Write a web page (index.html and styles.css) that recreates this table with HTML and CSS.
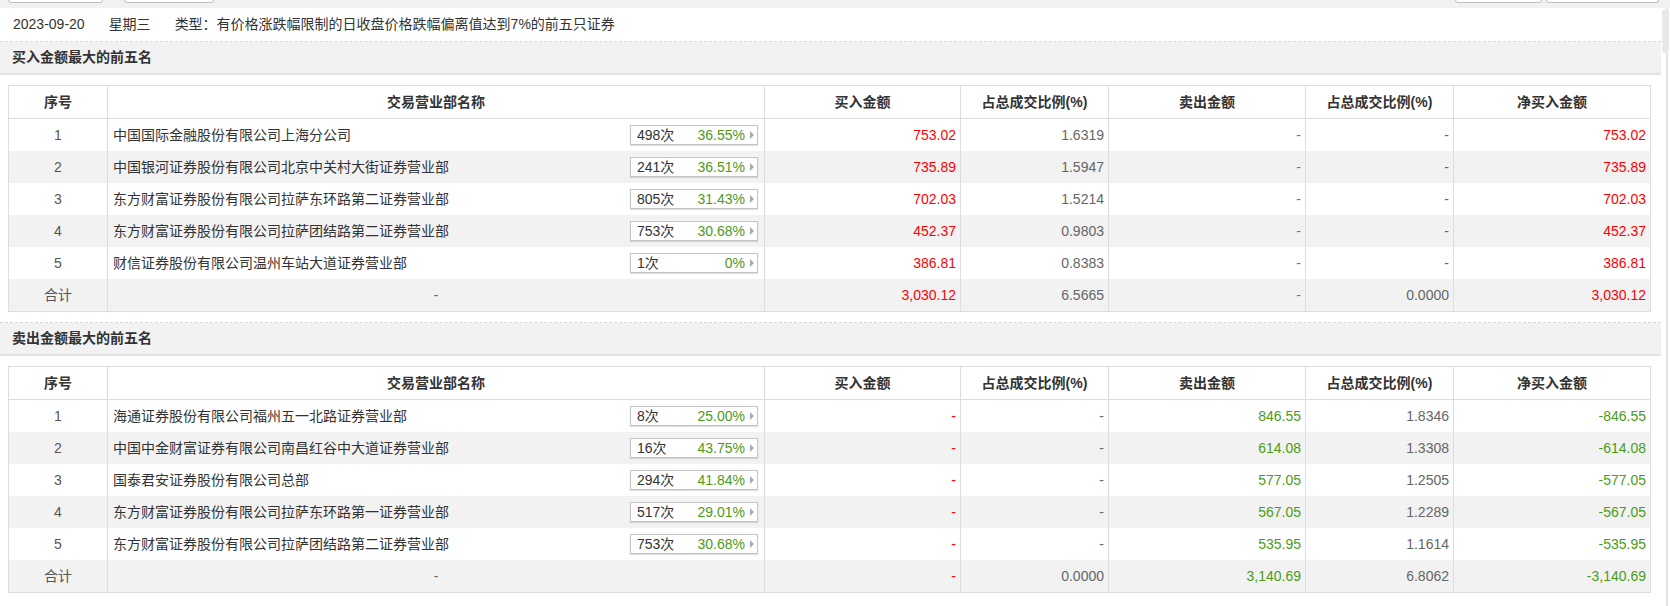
FILE: index.html
```html
<!DOCTYPE html>
<html lang="zh-CN">
<head>
<meta charset="utf-8">
<title>龙虎榜单</title>
<link rel="stylesheet" href="styles.css">
</head>
<body>
<div class="topbar">
  <div class="btns left"><span class="tbtn b1"></span><span class="tbtn b2"></span></div>
  <div class="btns right"><span class="tbtn b3"></span><span class="tbtn b4"></span></div>
</div>
<div class="viewport">
  <div class="main">
    <div class="dateline"><span>2023-09-20</span><span>星期三</span><span>类型：有价格涨跌幅限制的日收盘价格跌幅偏离值达到7%的前五只证券</span></div>

    <section class="block">
      <h3 class="block-title">买入金额最大的前五名</h3>
      <div class="block-body">
        <table class="lhb">
          <thead>
            <tr><th class="c1">序号</th><th class="c2">交易营业部名称</th><th class="c3">买入金额</th><th class="c4">占总成交比例(%)</th><th class="c5">卖出金额</th><th class="c6">占总成交比例(%)</th><th class="c7">净买入金额</th></tr>
          </thead>
          <tbody>
            <tr><td class="idx">1</td><td class="name"><div class="namecell"><span>中国国际金融股份有限公司上海分公司</span><span class="badge"><span class="cnt">498次</span><span class="pct">36.55%</span><i class="arr"></i></span></div></td><td class="red">753.02</td><td class="gray">1.6319</td><td class="green">-</td><td class="gray">-</td><td class="red">753.02</td></tr>
            <tr><td class="idx">2</td><td class="name"><div class="namecell"><span>中国银河证券股份有限公司北京中关村大街证券营业部</span><span class="badge"><span class="cnt">241次</span><span class="pct">36.51%</span><i class="arr"></i></span></div></td><td class="red">735.89</td><td class="gray">1.5947</td><td class="green">-</td><td class="gray">-</td><td class="red">735.89</td></tr>
            <tr><td class="idx">3</td><td class="name"><div class="namecell"><span>东方财富证券股份有限公司拉萨东环路第二证券营业部</span><span class="badge"><span class="cnt">805次</span><span class="pct">31.43%</span><i class="arr"></i></span></div></td><td class="red">702.03</td><td class="gray">1.5214</td><td class="green">-</td><td class="gray">-</td><td class="red">702.03</td></tr>
            <tr><td class="idx">4</td><td class="name"><div class="namecell"><span>东方财富证券股份有限公司拉萨团结路第二证券营业部</span><span class="badge"><span class="cnt">753次</span><span class="pct">30.68%</span><i class="arr"></i></span></div></td><td class="red">452.37</td><td class="gray">0.9803</td><td class="green">-</td><td class="gray">-</td><td class="red">452.37</td></tr>
            <tr><td class="idx">5</td><td class="name"><div class="namecell"><span>财信证券股份有限公司温州车站大道证券营业部</span><span class="badge"><span class="cnt">1次</span><span class="pct">0%</span><i class="arr"></i></span></div></td><td class="red">386.81</td><td class="gray">0.8383</td><td class="green">-</td><td class="gray">-</td><td class="red">386.81</td></tr>
            <tr><td class="idx">合计</td><td class="mid gray">-</td><td class="red">3,030.12</td><td class="gray">6.5665</td><td class="green">-</td><td class="gray">0.0000</td><td class="red">3,030.12</td></tr>
          </tbody>
        </table>
      </div>
    </section>

    <section class="block">
      <h3 class="block-title">卖出金额最大的前五名</h3>
      <div class="block-body">
        <table class="lhb">
          <thead>
            <tr><th class="c1">序号</th><th class="c2">交易营业部名称</th><th class="c3">买入金额</th><th class="c4">占总成交比例(%)</th><th class="c5">卖出金额</th><th class="c6">占总成交比例(%)</th><th class="c7">净买入金额</th></tr>
          </thead>
          <tbody>
            <tr><td class="idx">1</td><td class="name"><div class="namecell"><span>海通证券股份有限公司福州五一北路证券营业部</span><span class="badge"><span class="cnt">8次</span><span class="pct">25.00%</span><i class="arr"></i></span></div></td><td class="red">-</td><td class="gray">-</td><td class="green">846.55</td><td class="gray">1.8346</td><td class="green">-846.55</td></tr>
            <tr><td class="idx">2</td><td class="name"><div class="namecell"><span>中国中金财富证券有限公司南昌红谷中大道证券营业部</span><span class="badge"><span class="cnt">16次</span><span class="pct">43.75%</span><i class="arr"></i></span></div></td><td class="red">-</td><td class="gray">-</td><td class="green">614.08</td><td class="gray">1.3308</td><td class="green">-614.08</td></tr>
            <tr><td class="idx">3</td><td class="name"><div class="namecell"><span>国泰君安证券股份有限公司总部</span><span class="badge"><span class="cnt">294次</span><span class="pct">41.84%</span><i class="arr"></i></span></div></td><td class="red">-</td><td class="gray">-</td><td class="green">577.05</td><td class="gray">1.2505</td><td class="green">-577.05</td></tr>
            <tr><td class="idx">4</td><td class="name"><div class="namecell"><span>东方财富证券股份有限公司拉萨东环路第一证券营业部</span><span class="badge"><span class="cnt">517次</span><span class="pct">29.01%</span><i class="arr"></i></span></div></td><td class="red">-</td><td class="gray">-</td><td class="green">567.05</td><td class="gray">1.2289</td><td class="green">-567.05</td></tr>
            <tr><td class="idx">5</td><td class="name"><div class="namecell"><span>东方财富证券股份有限公司拉萨团结路第二证券营业部</span><span class="badge"><span class="cnt">753次</span><span class="pct">30.68%</span><i class="arr"></i></span></div></td><td class="red">-</td><td class="gray">-</td><td class="green">535.95</td><td class="gray">1.1614</td><td class="green">-535.95</td></tr>
            <tr><td class="idx">合计</td><td class="mid gray">-</td><td class="red">-</td><td class="gray">0.0000</td><td class="green">3,140.69</td><td class="gray">6.8062</td><td class="green">-3,140.69</td></tr>
          </tbody>
        </table>
      </div>
    </section>
  </div>
  <div class="scrollbar"><div class="thumb"></div></div>
</div>
</body>
</html>
```

FILE: styles.css
```css
* { box-sizing: border-box; }

html, body {
  margin: 0;
  padding: 0;
  background: #fff;
}

body {
  width: 1670px;
  height: 606px;
  overflow: hidden;
  font-family: "Liberation Sans", Arial, "Noto Sans CJK SC", sans-serif;
  font-size: 14px;
  color: #333;
}

/* top toolbar (scrolled mostly out of view) */
.topbar {
  height: 8px;
  background: #f1f1f1;
  display: flex;
  justify-content: space-between;
  align-items: flex-end;
  padding: 0 11px 0 8px;
  overflow: hidden;
}

.btns {
  display: flex;
  align-items: flex-end;
}

.btns.left { gap: 21px; }
.btns.right { gap: 4px; }

.tbtn {
  display: block;
  height: 22px;
  margin-bottom: 5px;
  background: #fff;
  border: 1px solid #bdbdbd;
  border-radius: 0 0 3px 3px;
}

.b1 { width: 95px; }
.b2 { width: 90px; }
.b3 { width: 87px; }
.b4 { width: 113px; }

.viewport {
  display: flex;
  height: 598px;
}

.main {
  flex: 0 0 1661px;
}

.scrollbar {
  flex: 1;
  padding: 1px 1px 0 1px;
  background: linear-gradient(to right, #fff 5px, #e4e4e4 5px, #e4e4e4 7px, #fff 7px);
}

.thumb {
  height: 44px;
  background: #e8e8e8;
  border-radius: 4px;
}

/* date line */
.dateline {
  height: 33px;
  line-height: 32px;
  padding-left: 13px;
  white-space: nowrap;
}

.dateline span {
  margin-right: 24px;
}

/* blocks */
.block {
  border-top: 1px dashed #d6d6d6;
}

.block-title {
  margin: 0;
  height: 33px;
  line-height: 31px;
  background: #f2f2f2;
  border-bottom: 2px solid #e3e3e3;
  font-size: 14px;
  font-weight: bold;
  padding-left: 12px;
  color: #333;
}

.block-body {
  padding: 10px 10px 10px 8px;
}

/* table */
.lhb {
  width: 100%;
  table-layout: fixed;
  border-collapse: separate;
  border-spacing: 0;
  border: 1px solid #ddd;
}

.lhb th {
  height: 33px;
  padding: 0;
  border-bottom: 1px solid #ddd;
  font-weight: bold;
  text-align: center;
  color: #333;
  line-height: 16px;
}

.lhb td {
  height: 32px;
  padding: 0 4px;
  text-align: right;
  line-height: 16px;
  white-space: nowrap;
}

.lhb th + th,
.lhb td + td {
  border-left: 1px solid #ddd;
}

.lhb tbody tr:nth-child(even) td {
  background: #f2f2f2;
}

.c1 { width: 98px; }
.c2 { width: 657px; }
.c3 { width: 196px; }
.c4 { width: 148px; }
.c5 { width: 197px; }
.c6 { width: 148px; }

.lhb td.idx {
  text-align: center;
  color: #555;
}

.lhb td.mid {
  text-align: center;
}

.lhb td.name {
  text-align: left;
  padding: 0 6px 0 5px;
  color: #333;
}

.namecell {
  display: flex;
  justify-content: space-between;
  align-items: center;
}

.badge {
  display: flex;
  align-items: center;
  width: 128px;
  height: 20px;
  padding: 0 3px 0 6px;
  background: #fff;
  border: 1px solid #c4c4c4;
  box-shadow: 0 1px 1px rgba(0, 0, 0, 0.12);
}

.badge .cnt {
  color: #333;
}

.badge .pct {
  flex: 1;
  text-align: right;
  color: #4d9a19;
}

.arr {
  display: block;
  width: 0;
  height: 0;
  margin-left: 5px;
  border-left: 4px solid #aaa;
  border-top: 4px solid transparent;
  border-bottom: 4px solid transparent;
}

.red { color: #f00; }
.green { color: #4d9a19; }
.gray { color: #666; }
```
